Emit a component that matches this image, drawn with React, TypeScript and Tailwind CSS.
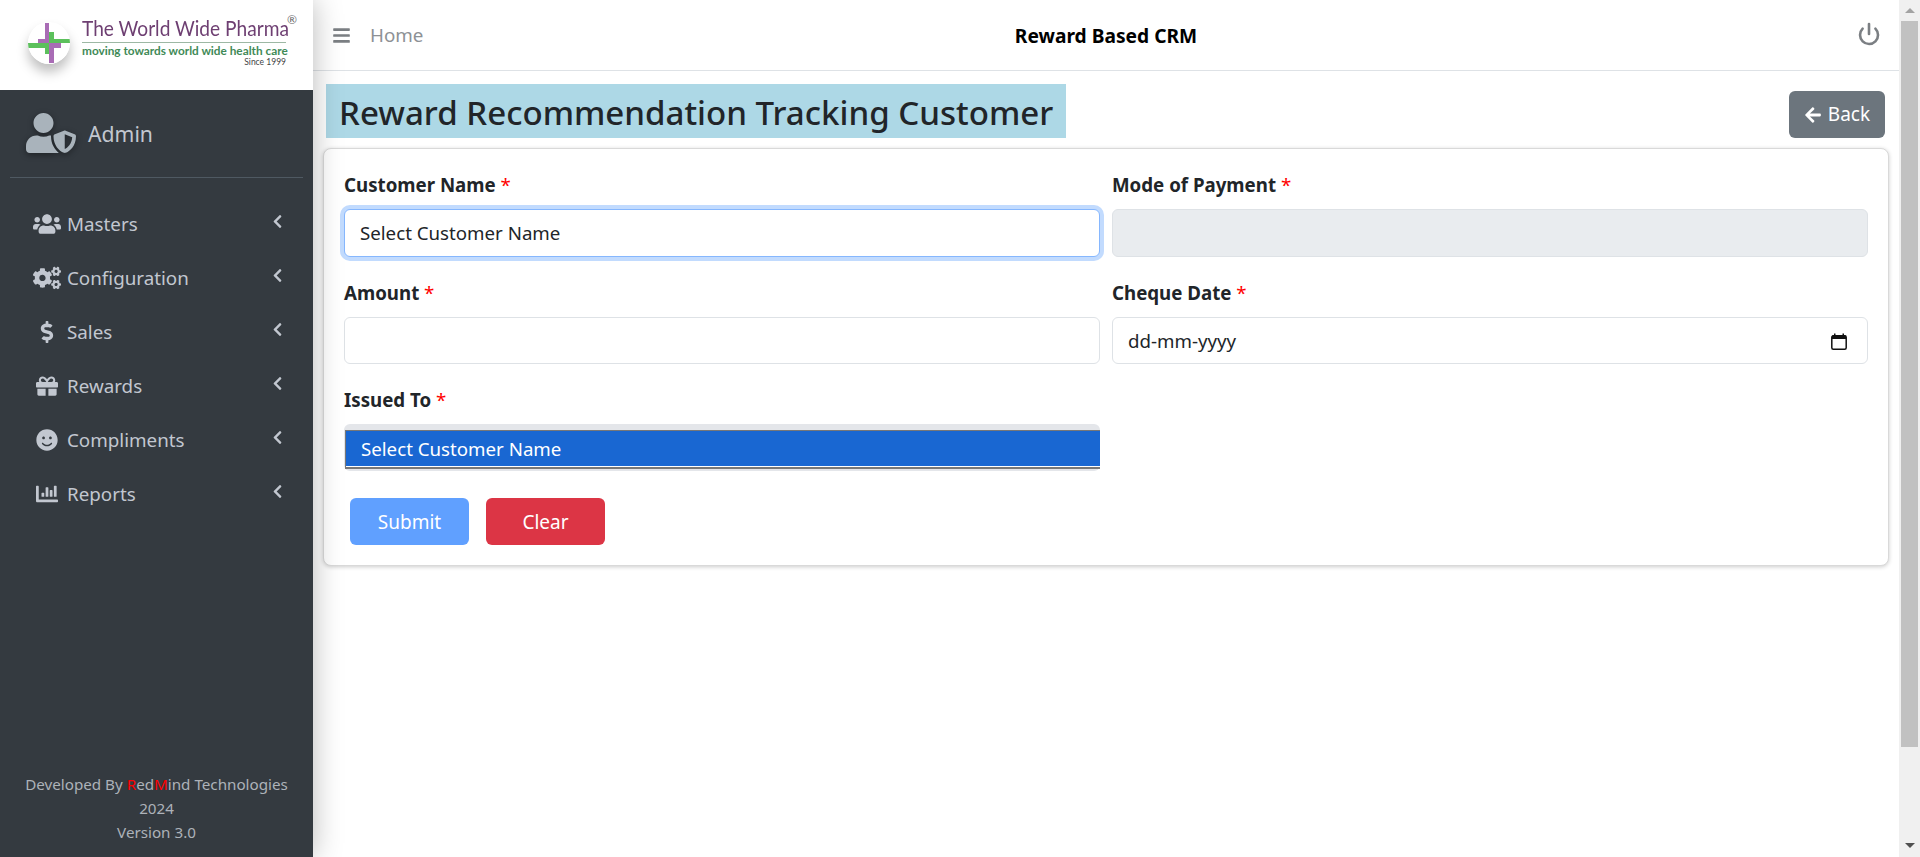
import { FaUsers, FaCogs, FaDollarSign, FaGift, FaSmile, FaChartBar, FaChevronLeft, FaBars, FaArrowLeft, FaUserShield } from 'react-icons/fa';
import { Power } from 'lucide-react';

const menuItems = [
  { label: 'Masters', icon: FaUsers, size: 'text-[28px]' },
  { label: 'Configuration', icon: FaCogs, size: 'text-[28px]' },
  { label: 'Sales', icon: FaDollarSign, size: 'text-[22px]' },
  { label: 'Rewards', icon: FaGift, size: 'text-[22px]' },
  { label: 'Compliments', icon: FaSmile, size: 'text-[22px]' },
  { label: 'Reports', icon: FaChartBar, size: 'text-[22px]' },
];

const Logo = () => (
  <div className="h-[90px] shrink-0 bg-white flex items-start pl-[28px]">
    <svg viewBox="0 0 42 42" className="w-[42px] h-[42px] mt-[22px] shrink-0 rounded-full shadow-[0_8px_12px_rgba(0,0,0,0.25)]">
      <circle cx="21" cy="21" r="21" fill="#fff" />
      <rect x="17" y="1" width="4" height="20" fill="#a96cb5" />
      <rect x="21" y="21" width="5" height="20" fill="#a96cb5" />
      <rect x="10" y="17" width="11" height="4" fill="#a96cb5" />
      <rect x="21" y="21" width="12" height="5" fill="#a96cb5" />
      <rect x="21" y="10" width="5" height="11" fill="#5cc05c" />
      <rect x="17" y="21" width="4" height="11" fill="#5cc05c" />
      <rect x="21" y="17" width="21" height="4" fill="#5cc05c" />
      <rect x="0" y="21" width="21" height="5" fill="#5cc05c" />
    </svg>
    <div className="ml-[12px] mt-[16px] w-[204px] relative font-['Lato',sans-serif]">
      <div className="text-[22px] leading-[24px] text-[#6e3f72] whitespace-nowrap origin-left scale-x-[0.87]">The World Wide Pharma</div>
      <div className="border-t border-[#9db8a4] mt-[2px]" />
      <div className="text-[11.8px] leading-[14px] font-bold text-[#3f8a57] whitespace-nowrap mt-[1px]">moving towards world wide health care</div>
      <div className="text-[8.5px] leading-[10px] text-right text-[#444] -mt-[1px]">Since 1999</div>
      <span className="absolute -right-[11px] -top-[3px] text-[12px] leading-[14px] text-[#666]">®</span>
    </div>
  </div>
);

const Sidebar = () => (
  <aside className="w-[313px] shrink-0 h-full bg-[#343a40] flex flex-col relative z-10 shadow-[0_0_28px_rgba(0,0,0,0.28)]">
    <Logo />
    <div className="mx-[10px] h-[88px] border-b border-[#4f5962] flex items-center pl-[16px]">
      <FaUserShield className="text-[#a9b3bb] w-[50px] h-[40px] -mt-[2px] drop-shadow-[0_2px_3px_rgba(0,0,0,0.4)]" />
      <span className="ml-[12px] text-[21.2px] text-[#c2c7d0]">Admin</span>
    </div>
    <nav className="pt-[19px]">
      {menuItems.map(({ label, icon: Icon, size }) => (
        <div key={label} className="h-[54px] flex items-center pl-[33px] pr-[28px] text-[#c2c7d0]">
          <span className="w-[28px] flex justify-center"><Icon className={size} /></span>
          <span className="ml-[6px] text-[18.8px]">{label}</span>
          <FaChevronLeft className="ml-auto text-[15px] -mt-[5px]" />
        </div>
      ))}
    </nav>
    <div className="mt-auto pb-[13px] text-center text-[15.2px] leading-[24px] text-[#adb2b9]">
      <div>Developed By <span className="text-[#ff0000]">R</span>ed<span className="text-[#ff0000]">M</span>ind Technologies</div>
      <div>2024</div>
      <div>Version 3.0</div>
    </div>
  </aside>
);

const Label = ({ children }: { children: string }) => (
  <label className="block text-[18.7px] leading-[24px] font-bold text-[#212529] mb-[12px] whitespace-nowrap">
    {children} <span className="text-[#ff0000] font-normal">*</span>
  </label>
);

const fieldClass = "w-full rounded-[6px] border border-[#dee2e6] bg-white px-[15px] flex items-center text-[18.7px] text-[#212529]";

const CalendarIcon = () => (
  <svg viewBox="0 0 16 17" className="w-[16px] h-[17px] ml-auto mr-[5px]">
    <rect x="0.8" y="2.8" width="14.4" height="13.4" rx="1.5" fill="#fff" stroke="#111" strokeWidth="1.5" />
    <rect x="1" y="2.5" width="14" height="3.5" fill="#111" />
    <rect x="3" y="0.5" width="1.5" height="2.5" fill="#111" />
    <rect x="11.5" y="0.5" width="1.5" height="2.5" fill="#111" />
  </svg>
);

const Form = () => (
  <div className="mx-[10px] mt-[10px] rounded-[8px] border border-[#d9d9d9] bg-white shadow-[0_1px_4px_rgba(0,0,0,0.2)] pt-[24px] pl-[20px] pr-[20px] pb-[20px]">
    <div className="grid grid-cols-2 gap-x-[12px] gap-y-[24px]">
      <div>
        <Label>Customer Name</Label>
        <div className={fieldClass + " h-[48px] !border-[#86b7fe] shadow-[0_0_0_4px_#c2dbfe]"}>Select Customer Name</div>
      </div>
      <div>
        <Label>Mode of Payment</Label>
        <div className={fieldClass + " h-[48px] !bg-[#e9ecef]"} />
      </div>
      <div>
        <Label>Amount</Label>
        <div className={fieldClass + " h-[47px]"} />
      </div>
      <div>
        <Label>Cheque Date</Label>
        <div className={fieldClass + " h-[47px] pt-[1px]"}>dd-mm-yyyy<CalendarIcon /></div>
      </div>
      <div>
        <Label>Issued To</Label>
        <div className="h-[47px] rounded-[6px] bg-[#e4e6ea] pt-[6px] pl-[1px]">
          <div className="h-[39px] bg-[#1967d2] border-l border-b-[2px] border-t border-[#777] border-r-0 text-white text-[18.7px] flex items-center pl-[15px] pt-[1px] shadow-[inset_0_-1px_0_#fff]">Select Customer Name</div>
        </div>
      </div>
    </div>
    <div className="flex gap-[17px] pl-[6px] mt-[27px]">
      <button className="w-[119px] h-[47px] pt-[1px] rounded-[6px] bg-[#60a0ff] text-white text-[19px]">Submit</button>
      <button className="w-[119px] h-[47px] pt-[1px] rounded-[6px] bg-[#dc3545] text-white text-[19px]">Clear</button>
    </div>
  </div>
);

const Main = () => (
  <main className="flex-1 min-w-0 h-full bg-white flex flex-col">
    <header className="h-[71px] shrink-0 border-b border-[#dee2e6] grid grid-cols-3 items-center pl-[19px] pr-[19px]">
      <div className="flex items-center pt-[1px]">
        <FaBars className="text-[#7b7f83] text-[19px]" />
        <span className="ml-[19px] text-[18.8px] text-[#8d9195]">Home</span>
      </div>
      <div className="text-center pt-[3px] text-[19.2px] font-bold text-black whitespace-nowrap">Reward Based CRM</div>
      <Power className="ml-auto w-[24px] h-[24px] -mr-[1px] -mt-[2px] text-[#7b7f83]" strokeWidth={2.6} />
    </header>
    <div className="flex items-end justify-between pl-[13px] pr-[14px] pt-[13px]">
      <h2 className="h-[54px] bg-[#add8e6] px-[13px] pt-[3px] flex items-center text-[33.1px] font-medium text-[#212529] whitespace-nowrap">Reward Recommendation Tracking Customer</h2>
      <button className="w-[96px] h-[47px] rounded-[6px] bg-[#6c757d] text-white text-[19px] flex items-center justify-center gap-[6px]">
        <FaArrowLeft className="text-[18px]" />Back
      </button>
    </div>
    <Form />
  </main>
);

const Scrollbar = () => (
  <div className="w-[21px] shrink-0 h-full bg-[#f0f0f0] flex flex-col items-center">
    <div className="h-[21px] flex items-center justify-center">
      <div className="w-0 h-0 border-x-[5px] border-x-transparent border-b-[5px] border-b-[#a3a3a3]" />
    </div>
    <div className="w-[17px] h-[726px] bg-[#c1c1c1]" />
    <div className="mt-auto h-[24px] flex items-center justify-center">
      <div className="w-0 h-0 border-x-[5px] border-x-transparent border-t-[5px] border-t-[#505050]" />
    </div>
  </div>
);

export default function App() {
  return (
    <div className="h-[857px] w-[1920px] flex overflow-hidden font-['Noto_Sans',sans-serif]">
      <Sidebar />
      <Main />
      <Scrollbar />
    </div>
  );
}
